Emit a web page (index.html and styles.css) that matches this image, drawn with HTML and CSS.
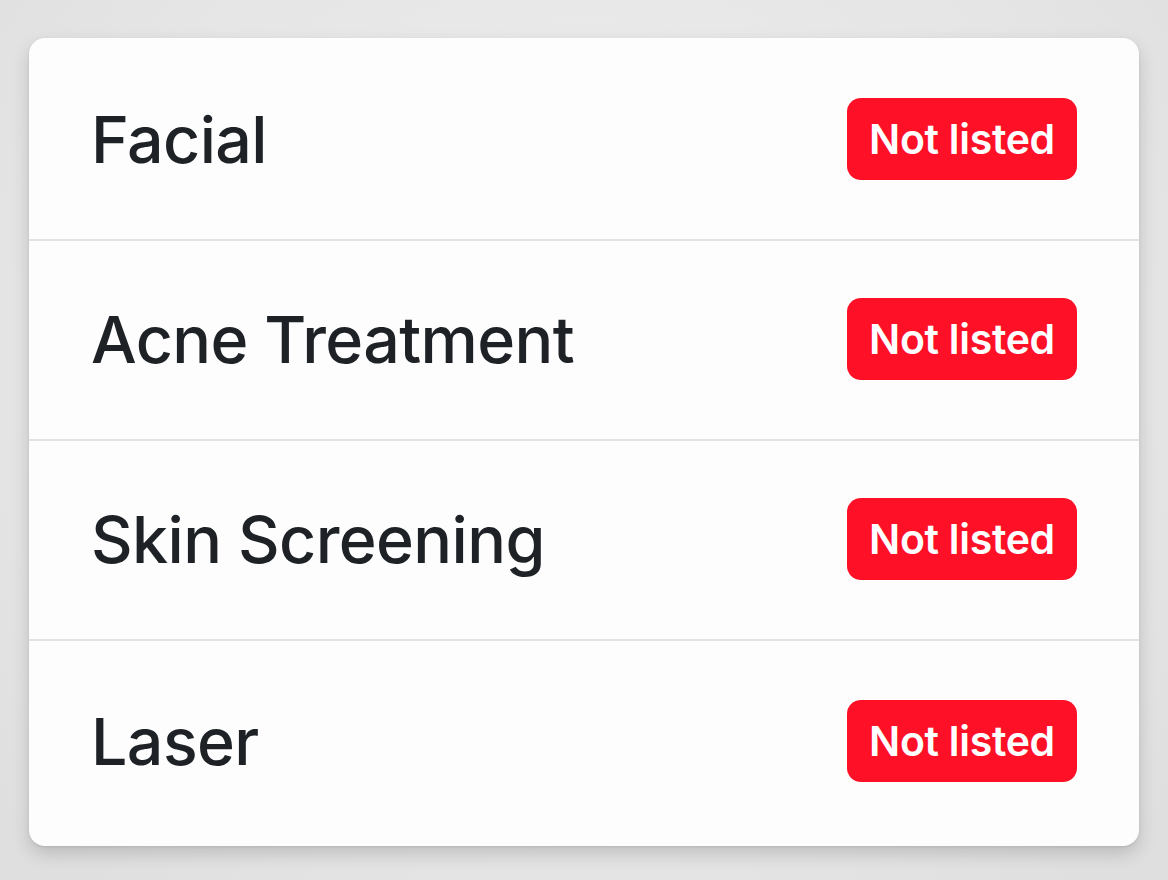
FILE: index.html
```html
<!DOCTYPE html>
<html lang="en">
	<head>
		<meta charset="UTF-8" />
		<meta name="viewport" content="width=device-width, initial-scale=1.0" />
		<title>Treatments</title>
		<link rel="stylesheet" href="styles.css">
	</head>
	<body>
		<section class="card">
			<div class="row">
				<span class="name">Facial</span>
				<span class="badge">Not listed</span>
			</div>
			<div class="row">
				<span class="name">Acne Treatment</span>
				<span class="badge">Not listed</span>
			</div>
			<div class="row">
				<span class="name">Skin Screening</span>
				<span class="badge">Not listed</span>
			</div>
			<div class="row">
				<span class="name">Laser</span>
				<span class="badge">Not listed</span>
			</div>
		</section>
	</body>
</html>
```

FILE: styles.css
```css
html,
body {
	height: 100%;
}

body {
	margin: 0;
	padding: 38px 29px 0 29px;
	box-sizing: border-box;
	background: radial-gradient(ellipse at 50% 40%, #f0f0f0 0%, #e6e6e6 60%, #dedede 100%);
	font-family: Inter, "Noto Sans", sans-serif;
	color: #1e2226;
}

.card {
	display: flex;
	flex-direction: column;
	background-color: #fdfdfd;
	border-radius: 16px;
	padding: 3px 0 4px 0;
	box-shadow: 0 8px 18px rgba(0, 0, 0, 0.16), 0 1px 3px rgba(0, 0, 0, 0.08);
	overflow: hidden;
}

.row {
	display: flex;
	justify-content: space-between;
	align-items: center;
	height: 198px;
	padding: 0 62px 0 62px;
	border-bottom: 2px solid #e2e2e2;
}

.row:last-child {
	border-bottom: none;
	height: 201px;
}

.name {
	font-size: 64.5px;
	font-weight: 500;
	letter-spacing: -0.6px;
}

.badge {
	display: flex;
	align-items: center;
	justify-content: center;
	width: 230px;
	height: 82px;
	margin-top: -2px;
	box-sizing: border-box;
	border-radius: 14px;
	background-color: #fe1127;
	color: #fff;
	font-size: 41px;
	font-weight: 600;
	letter-spacing: -0.3px;
}
```
